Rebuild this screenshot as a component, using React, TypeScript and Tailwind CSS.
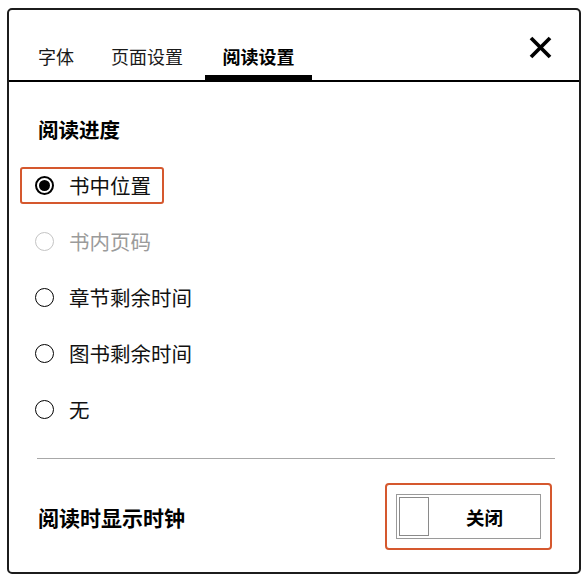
import React from "react";

const font = { fontFamily: '"Noto Sans CJK SC", "Noto Sans", sans-serif' };

function Radio({ checked, disabled }: { checked?: boolean; disabled?: boolean }) {
  if (checked) {
    return (
      <span className="flex h-[19px] w-[19px] shrink-0 items-center justify-center rounded-full border-2 border-black">
        <span className="block h-[11px] w-[11px] rounded-full bg-black" />
      </span>
    );
  }
  return (
    <span
      className={
        disabled
          ? "block h-[19px] w-[19px] shrink-0 rounded-full border-[1.5px] border-[#c4c4c4]"
          : "block h-[19px] w-[19px] shrink-0 rounded-full border-[1.5px] border-black"
      }
    />
  );
}

function Option({
  label,
  checked,
  disabled,
  highlight,
}: {
  label: string;
  checked?: boolean;
  disabled?: boolean;
  highlight?: boolean;
}) {
  return (
    <div className="flex h-[56px] items-center">
      <div
        className={
          highlight
            ? "flex h-[37px] items-center gap-[15px] rounded-[3px] border-2 border-[#d5582e] pl-[13px] pr-[11px]"
            : "flex h-[37px] items-center gap-[15px] rounded-[3px] border-2 border-transparent pl-[13px] pr-[11px]"
        }
      >
        <Radio checked={checked} disabled={disabled} />
        <span
          className={
            disabled
              ? "text-[20.5px] leading-[28px] text-[#9b9b9b]"
              : "text-[20.5px] leading-[28px] text-[#111]"
          }
        >
          {label}
        </span>
      </div>
    </div>
  );
}

export default function App() {
  return (
    <div className="h-[580px] w-[587px] bg-white pl-[7px] pt-[8px]" style={font}>
      <div className="h-[566px] w-[574px] rounded-[5px] border-2 border-[#1c1c1c] bg-white">
        {/* header */}
        <div className="flex h-[72px] items-end border-b-2 border-black pl-[29px]">
          <div className="mr-[37px] border-b-[5px] border-transparent pb-[6px] text-[18px] leading-[26px] text-[#1a1a1a]">
            字体
          </div>
          <div className="mr-[22px] border-b-[5px] border-transparent pb-[6px] text-[18px] leading-[26px] text-[#1a1a1a]">
            页面设置
          </div>
          <div className="w-[107px] border-b-[5px] border-black pb-[6px] text-center text-[18px] font-bold leading-[26px] text-black">
            阅读设置
          </div>
          <div className="ml-auto mr-[27px] self-start pt-[26px]">
            <svg width="23" height="23" viewBox="0 0 23 23">
              <line x1="2" y1="2" x2="21" y2="21" stroke="black" strokeWidth="3.8" />
              <line x1="21" y1="2" x2="2" y2="21" stroke="black" strokeWidth="3.8" />
            </svg>
          </div>
        </div>

        {/* body */}
        <div className="pt-[33px]">
          <div className="pl-[29px] text-[20.5px] font-bold leading-[28px] text-black">阅读进度</div>
          <div className="mt-[14px] pl-[11px]">
            <Option label="书中位置" checked highlight />
            <Option label="书内页码" disabled />
            <Option label="章节剩余时间" />
            <Option label="图书剩余时间" />
            <Option label="无" />
          </div>

          <div className="ml-[28px] mr-[24px] mt-[21px] h-px bg-[#a8a8a8]" />

          <div className="mt-[24px] flex items-center justify-between pl-[29px] pr-[27px]">
            <span className="text-[21px] font-bold leading-[28px] text-black">阅读时显示时钟</span>
            <div className="rounded-[4px] border-2 border-[#d5582e] p-[9px]">
              <div className="flex h-[45px] w-[145px] items-center border border-[#9a9a9a] pl-[2px]">
                <div className="h-[39px] w-[30px] border border-[#8a8a8a]" />
                <div className="flex-1 text-center text-[18.5px] font-bold leading-[26px] text-black">关闭</div>
              </div>
            </div>
          </div>
        </div>
      </div>
    </div>
  );
}
